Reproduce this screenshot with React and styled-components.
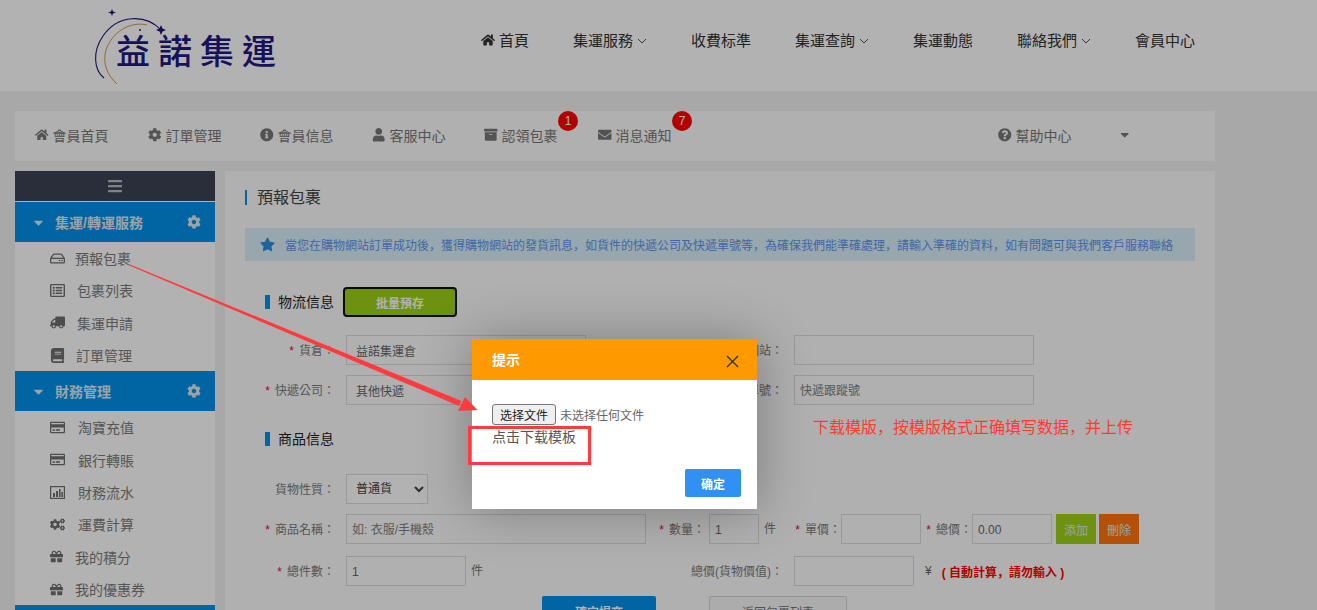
import React from 'react';
import styled, { createGlobalStyle } from 'styled-components';
import {
  FaHome, FaCog, FaInfoCircle, FaUser, FaArchive, FaEnvelope, FaQuestionCircle, FaCaretDown,
  FaBars, FaRegHdd, FaRegListAlt, FaTruck, FaBook, FaRegCreditCard,
  FaCogs, FaGift, FaStar,
} from 'react-icons/fa';

const SANS = '"Liberation Sans", "Noto Sans CJK SC", sans-serif';
const TC = '"Liberation Sans", "Noto Sans CJK TC", sans-serif';

const Global = createGlobalStyle`
  html, body { margin: 0; padding: 0; height: 610px; overflow: hidden; background: #f1f1f1; }
  body { font-family: ${SANS}; font-size: 14px; color: #333; }
  * { box-sizing: border-box; }
`;

const Page = styled.div`position: relative; width: 1317px; height: 610px; overflow: hidden;`;

const Header = styled.header`
  height: 91px; background: #fff; display: flex; align-items: center; padding: 0 122px 7px 90px;
  justify-content: space-between;
`;
const LogoSvg = styled.svg`width: 200px; height: 84px; flex: none; margin-top: 7px;`;
const MainNav = styled.nav`display: flex; gap: 44px; align-items: center; font-size: 15px; color: #333; margin-bottom: 5px;`;
const MainItem = styled.span`display: inline-flex; align-items: center; white-space: nowrap;`;
const NavHome = styled(FaHome)`margin-right: 4px; font-size: 14px; flex: none;`;
const Chevron = styled.svg`width: 10px; height: 6px; margin: 2px 0 0 4px; flex: none;`;

const Container = styled.div`width: 1200px; margin: 20px 0 0 15px;`;
const TopBar = styled.div`
  height: 50px; background: #fcfcfc; display: flex; align-items: center; padding: 0 20px 2px; font-size: 14px; color: #787878;
`;
const TopItem = styled.span`
  position: relative; display: inline-flex; align-items: center; gap: 4px; width: ${p => p.$w}px; white-space: nowrap;
  margin-left: ${p => p.$ml || 0}px;
  svg { font-size: 13.5px; flex: none; }
`;
const Badge = styled.span`
  position: absolute; top: -14px; left: ${p => p.$l}px; width: 20px; height: 20px; border-radius: 50%;
  background: #ff0000; color: #fff; font-size: 12px; display: flex; align-items: center; justify-content: center;
`;
const Columns = styled.div`display: flex; gap: 10px; margin-top: 10px;`;

const Sidebar = styled.aside`width: 200px; flex: none; background: #fff;`;
const Toggle = styled.div`
  height: 30px; background: #3c4353; color: #b8bcc4; display: flex; align-items: center; justify-content: center; font-size: 16px;
  margin-bottom: 1px;
`;
const GroupHead = styled.div`
  height: 40px; background: #0091e8; color: #ddeaf4; display: flex; align-items: center; font-weight: 700; font-size: 14px;
  padding: 0 14px 0 16px;
  svg:first-child { font-size: 15px; margin-right: 9px; }
  svg:last-child { margin-left: auto; font-size: 14px; }
`;
const MenuItem = styled.div`
  height: 32.33px; display: flex; align-items: center; padding-left: 35px; color: #7c7c7c; font-size: 14px;
`;
const MenuIcon = styled.span`
  width: ${p => p.$w}px; flex: none; display: flex; align-items: center; color: #6f6f6f; font-size: 15px;
`;
const FlippedTruck = styled(FaTruck)`transform: scaleX(-1);`;
const GiftIcon = styled(FaGift)`font-size: 13px;`;
const ChartIcon = styled.svg`width: 15px; height: 13px;`;

const Content = styled.main`flex: 1; background: #fdfdfd; height: 470px; padding: 19px 20px 0;`;
const Title = styled.h2`
  margin: 0; border-left: 2px solid #0091e8; padding-left: 10px; font-size: 16px; font-weight: 400; line-height: 15px; color: #444;
`;
const Alert = styled.div`
  margin-top: 23px; height: 33px; background: #d8eff8; display: flex; align-items: center; padding-left: 15px; color: #5c96ee; font-size: 12px;
  white-space: nowrap;
  svg { font-size: 15px; margin-right: 10px; color: #2b8fdc; flex: none; }
`;
const SectionRow = styled.div`
  display: flex; align-items: center; height: 30px; padding-left: 20px; margin-top: ${p => p.$mt}px;
`;
const SectionBar = styled.i`width: 5px; height: 14px; background: #0091e8; margin-right: 8px;`;
const SectionName = styled.span`font-size: 14px; color: #222; margin-bottom: 2px;`;
const BatchButton = styled.button`
  margin-left: 9px; width: 114px; height: 30px; background: #9dd117; border: 2px solid #111; border-radius: 4px;
  color: #fff; font: 700 12px ${SANS}; padding: 0;
`;
const Row = styled.div`
  display: flex; align-items: center; height: 30px; margin-top: ${p => p.$mt}px; font-size: 12px; color: #777;
`;
const Label = styled.label`
  width: ${p => p.$w}px; flex: none; text-align: right; padding-right: ${p => p.$pr ?? 11}px; white-space: nowrap;
  font-family: ${TC}; color: #7a7a7a; margin-bottom: 1px;
`;
const Star = styled.span`color: #e2004f; margin-right: 5px;`;
const Field = styled.input`
  width: ${p => p.$w}px; height: 30px; flex: none; border: 1px solid #dcdcdc; background: transparent;
  padding: ${p => (p.$wide ? '0 9px' : '2px 5px 0')};
  font: 12px ${SANS}; color: #666; outline: none;
  &::placeholder { color: #808080; opacity: 1; }
`;
const Choice = styled.select`
  width: 82px; height: 30px; flex: none; border: 1px solid #dcdcdc; background: #fff; padding: 0 5px;
  font: 12px ${SANS}; color: #444; border-radius: 0; outline: none;
`;
const Unit = styled.span`margin: 0 0 3px 5px; width: ${p => p.$w}px; flex: none;`;
const Yen = styled.span`margin-left: 11px; color: #666;`;
const Warn = styled.b`margin-left: 10px; color: #ff0000; font-size: 12px; white-space: pre;`;
const SmallButton = styled.button`
  width: 40px; height: 30px; flex: none; margin-left: ${p => p.$ml}px; border: 0; background: ${p => p.$bg}; color: #e8e8e8;
  font: 12px ${SANS}; padding: 0;
`;
const Actions = styled.div`display: flex; margin: 10px 0 0 297px; gap: 53px;`;
const Submit = styled.button`
  width: 114px; height: 30px; border: 0; border-radius: 2px 2px 0 0; background: #0091e8; color: #fff; font: 700 12px ${SANS};
`;
const Back = styled.button`
  width: 138px; height: 30px; border: 1px solid #d4d4d4; border-radius: 2px 2px 0 0; background: #f6f6f6; color: #777; font: 12px ${SANS};
`;

const Shade = styled.div`position: absolute; inset: 0; background: rgba(0, 0, 0, .3);`;
const Dialog = styled.div`
  position: absolute; left: 472px; top: 339px; width: 285px; height: 170px; background: #fff;
  box-shadow: 1px 1px 50px rgba(0, 0, 0, .3);
`;
const DialogHead = styled.div`
  height: 41px; background: #ff9900; color: #fff; display: flex; align-items: center; justify-content: space-between;
  padding: 0 18px 2px 20px; font-size: 14px; font-weight: 700;
`;
const CloseIcon = styled.svg`width: 13px; height: 13px; margin-top: 5px;`;
const DialogBody = styled.div`padding: 24px 20px 0; font-size: 12px; color: #666;`;
const FilePick = styled.div`display: flex; align-items: center; gap: 4px; height: 21px; color: #666;`;
const FileButton = styled.button`
  width: 64px; height: 21px; padding: 0; border: 1px solid #767676; border-radius: 3px; background: #efefef; color: #222; font: 12px ${SANS};
`;
const DownloadLink = styled.div`margin-top: 3px; font-size: 14px; line-height: 18px; color: #555;`;
const OkButton = styled.button`
  position: absolute; right: 16px; bottom: 12px; width: 56px; height: 28px; border: 0; border-radius: 2px; background: #3091f2; color: #fff;
  font: 700 12px ${SANS}; padding: 0;
`;
const RedBox = styled.div`
  position: absolute; left: 468px; top: 426px; width: 123px; height: 39px; border: 3px solid #ff3b3f;
`;
const Note = styled.div`
  position: absolute; left: 813px; top: 417px; font-size: 16px; line-height: 22px; color: #ff3b30; white-space: nowrap;
`;
const ArrowSvg = styled.svg`position: absolute; left: 0; top: 0; width: 1317px; height: 610px; pointer-events: none;`;

const Logo = () => (
  <LogoSvg viewBox="90 0 200 84">
    <path d="M161 26 C146 10 118 10 103 32 C92 48 94 66 104 74" fill="none" stroke="#1f1670" strokeWidth="1.1" />
    <path d="M147 21 C130 17 112 28 106 46 C102 60 108 72 117 80" fill="none" stroke="#d69a3c" strokeWidth="1" />
    <path d="M161 21 L162.5 24.5 L166 26 L162.5 27.5 L161 31 L159.5 27.5 L156 26 L159.5 24.5 Z" fill="#1f1670" />
    <path d="M112 5 L113 7.5 L116 8.5 L113 9.5 L112 12 L111 9.5 L108 8.5 L111 7.5 Z" fill="#1f1670" />
    <circle cx="140" cy="26" r="1" fill="#1f1670" />
    <text x="116" y="60" fontFamily="'Noto Sans CJK TC', sans-serif" fontSize="34" fontWeight="500" letterSpacing="8" fill="#211781">益諾集運</text>
  </LogoSvg>
);

const Down = () => (
  <Chevron viewBox="0 0 10 6"><path d="M1 1 L5 5 L9 1" fill="none" stroke="#555" strokeWidth="1" /></Chevron>
);

const BarChart = () => (
  <ChartIcon viewBox="0 0 15 13">
    <rect x=".6" y=".6" width="13.8" height="11.8" fill="none" stroke="currentColor" strokeWidth="1.2" />
    <path d="M3 7h2v4H3zM6 5h2v6H6zM9 3h1.6v8H9zM11.4 6H13v5h-1.6z" fill="currentColor" />
  </ChartIcon>
);

const menuA = [
  [<FaRegHdd />, 25, '預報包裹'],
  [<FaRegListAlt />, 27, '包裹列表'],
  [<FlippedTruck />, 27, '集運申請'],
  [<FaBook />, 26, '訂單管理'],
];
const menuB = [
  [<FaRegCreditCard />, 28, '淘寶充值'],
  [<FaRegCreditCard />, 28, '銀行轉賬'],
  [<BarChart />, 28, '財務流水'],
  [<FaCogs />, 28, '運費計算'],
  [<GiftIcon />, 25, '我的積分'],
  [<GiftIcon />, 25, '我的優惠券'],
];
const Menu = ({ items }) => items.map(([icon, w, text]) => (
  <MenuItem key={text}><MenuIcon $w={w}>{icon}</MenuIcon>{text}</MenuItem>
));
const Req = () => <Star>*</Star>;

export default function App() {
  return (
    <Page>
      <Global />
      <Header>
        <Logo />
        <MainNav>
          <MainItem><NavHome />首頁</MainItem>
          <MainItem>集運服務<Down /></MainItem>
          <MainItem>收費标準</MainItem>
          <MainItem>集運查詢<Down /></MainItem>
          <MainItem>集運動態</MainItem>
          <MainItem>聯絡我們<Down /></MainItem>
          <MainItem>會員中心</MainItem>
        </MainNav>
      </Header>
      <Container>
        <TopBar>
          <TopItem $w={113}><FaHome />會員首頁</TopItem>
          <TopItem $w={112}><FaCog />訂單管理</TopItem>
          <TopItem $w={112}><FaInfoCircle />會員信息</TopItem>
          <TopItem $w={112}><FaUser />客服中心</TopItem>
          <TopItem $w={114}><FaArchive />認領包裹<Badge $l={74}>1</Badge></TopItem>
          <TopItem $w={112}><FaEnvelope />消息通知<Badge $l={74}>7</Badge></TopItem>
          <TopItem $w={120} $ml={288}><FaQuestionCircle />幫助中心</TopItem>
          <TopItem $w={12}><FaCaretDown /></TopItem>
        </TopBar>
        <Columns>
          <Sidebar>
            <Toggle><FaBars /></Toggle>
            <GroupHead><FaCaretDown />集運/轉運服務<FaCog /></GroupHead>
            <Menu items={menuA} />
            <GroupHead><FaCaretDown />財務管理<FaCog /></GroupHead>
            <Menu items={menuB} />
            <GroupHead />
          </Sidebar>
          <Content>
            <Title>預報包裹</Title>
            <Alert><FaStar />當您在購物網站訂單成功後，獲得購物網站的發貨訊息，如貨件的快遞公司及快遞單號等，為確保我們能準確處理，請輸入準確的資料，如有問題可與我們客戶服務聯絡</Alert>
            <SectionRow $mt={26}>
              <SectionBar /><SectionName>物流信息</SectionName><BatchButton>批量預存</BatchButton>
            </SectionRow>
            <Row $mt={18}>
              <Label $w={101}><Req />貨倉：</Label>
              <Field $wide $w={240} defaultValue="益諾集運倉" />
              <Label $w={208}>發貨網站：</Label>
              <Field $w={240} />
            </Row>
            <Row $mt={10}>
              <Label $w={101}><Req />快遞公司：</Label>
              <Field $wide $w={240} defaultValue="其他快遞" />
              <Label $w={208}>快遞單號：</Label>
              <Field $w={240} placeholder="快遞跟蹤號" />
            </Row>
            <SectionRow $mt={19}>
              <SectionBar /><SectionName>商品信息</SectionName>
            </SectionRow>
            <Row $mt={20}>
              <Label $w={101}>貨物性質：</Label>
              <Choice defaultValue="普通貨"><option>普通貨</option></Choice>
            </Row>
            <Row $mt={10}>
              <Label $w={101}><Req />商品名稱：</Label>
              <Field $w={300} placeholder="如: 衣服/手機殼" />
              <Label $w={63} $pr={4}><Req />數量：</Label>
              <Field $w={50} defaultValue="1" />
              <Unit $w={30}>件</Unit>
              <Label $w={47} $pr={0}><Req />單價：</Label>
              <Field $w={80} />
              <Label $w={51} $pr={0}><Req />總價：</Label>
              <Field $w={80} defaultValue="0.00" />
              <SmallButton $ml={4} $bg="#9dd117">添加</SmallButton>
              <SmallButton $ml={3} $bg="#ff750b">刪除</SmallButton>
            </Row>
            <Row $mt={12}>
              <Label $w={101}><Req />總件數：</Label>
              <Field $w={120} defaultValue="1" />
              <Unit $w={12}>件</Unit>
              <Label $w={311}>總價(貨物價值)：</Label>
              <Field $w={120} />
              <Yen>¥</Yen>
              <Warn>( 自動計算，請勿輸入 )</Warn>
            </Row>
            <Actions>
              <Submit>確定提交</Submit>
              <Back>返回包裹列表</Back>
            </Actions>
          </Content>
        </Columns>
      </Container>
      <Shade />
      <Dialog>
        <DialogHead>提示
          <CloseIcon viewBox="0 0 13 13"><path d="M1 1 L12 12 M12 1 L1 12" stroke="#333" strokeWidth="1.4" fill="none" /></CloseIcon>
        </DialogHead>
        <DialogBody>
          <FilePick><FileButton>选择文件</FileButton>未选择任何文件</FilePick>
          <DownloadLink>点击下载模板</DownloadLink>
        </DialogBody>
        <OkButton>确定</OkButton>
      </Dialog>
      <RedBox />
      <Note>下载模版，按模版格式正确填写数据，并上传</Note>
      <ArrowSvg viewBox="0 0 1317 610">
        <polygon points="130,264.5 130.5,266 459,406 461.5,401" fill="#ff3b3f" />
        <polygon points="477.5,410 465,397 458,411" fill="#ff3b3f" />
      </ArrowSvg>
    </Page>
  );
}
